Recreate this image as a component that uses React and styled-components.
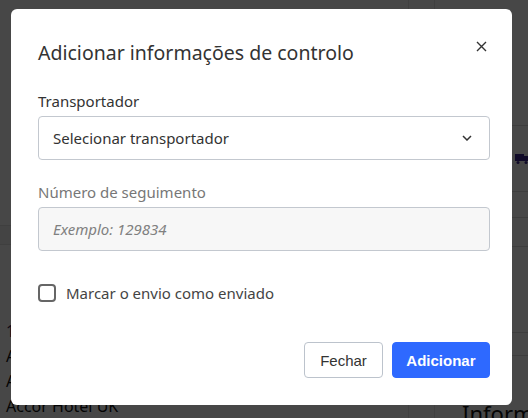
import React from "react";
import styled, { createGlobalStyle } from "styled-components";

const Global = createGlobalStyle`
  html, body { margin: 0; padding: 0; }
  body {
    width: 528px; height: 418px; overflow: hidden;
    font-family: "Noto Sans", "Liberation Sans", sans-serif;
    background: #fff;
  }
`;

const Page = styled.div`
  display: flex;
  width: 528px;
  height: 418px;
  background: #fff;
  overflow: hidden;
`;

const MainCol = styled.div`
  width: 408px;
  flex-shrink: 0;
  display: flex;
  flex-direction: column;
  border-right: 1px solid #e4e4e4;
`;

const TopArea = styled.div`
  height: 225px;
`;

const Band = styled.div`
  height: 18px;
  background: #f2f2f2;
  border-top: 1px solid #e0e0e0;
  border-bottom: 1px solid #e0e0e0;
`;

const Rows = styled.div`
  display: flex;
  flex-direction: column;
  padding: 77px 0 0 6px;
  gap: 6px;
`;

const BgText = styled.div`
  font-size: 16px;
  line-height: 19px;
  color: ${p => p.$c || "#111"};
`;

const Gutter = styled.div`
  width: 25px;
  flex-shrink: 0;
  border-right: 1px solid #e4e4e4;
`;

const Side = styled.div`
  flex: 1;
  min-width: 0;
  overflow: hidden;
  display: flex;
  flex-direction: column;
`;

const SideRow = styled.div`
  height: ${p => p.$h}px;
  flex-shrink: 0;
  border-bottom: 1px solid #dcdcdc;
  display: flex;
  align-items: center;
  justify-content: flex-end;
`;

const SideTitle = styled.div`
  margin-top: auto;
  padding-left: 27px;
  font-size: 22px;
  line-height: 16px;
  height: 13px;
  color: #111;
  white-space: nowrap;
  overflow: hidden;
`;

const Overlay = styled.div`
  position: fixed;
  inset: 0;
  background: rgba(0, 0, 0, 0.72);
`;

const Modal = styled.div`
  position: fixed;
  top: 9px;
  left: 11px;
  width: 501px;
  height: 396px;
  box-sizing: border-box;
  background: #fff;
  border-radius: 6px;
  padding: 31px 22px 27px 27px;
  display: flex;
  flex-direction: column;
`;

const Header = styled.div`
  display: flex;
  justify-content: space-between;
  align-items: flex-start;
  margin-bottom: 25px;
`;

const Title = styled.h2`
  margin: 0;
  font-size: 19.5px;
  line-height: 26px;
  font-weight: 400;
  color: #333;
`;

const Close = styled.button`
  border: 0;
  background: none;
  padding: 0;
  margin: 0 3px 0 0;
  width: 12px;
  height: 12px;
  display: flex;
  align-items: center;
  justify-content: center;
  color: #333;
`;

const Field = styled.div`
  display: flex;
  flex-direction: column;
  gap: 5px;
  margin-bottom: 22px;
`;

const Label = styled.label`
  font-size: 15px;
  line-height: 20px;
  color: ${p => (p.$muted ? "#777" : "#333")};
`;

const Box = styled.div`
  height: 44px;
  box-sizing: border-box;
  border: 1px solid #c3c8cf;
  border-radius: 4px;
  background: ${p => (p.$disabled ? "#f7f7f7" : "#fff")};
  display: flex;
  align-items: center;
  justify-content: space-between;
  padding: 0 17px 0 14px;
  font-size: 15px;
  color: ${p => (p.$disabled ? "#808080" : "#333")};
  font-style: ${p => (p.$disabled ? "italic" : "normal")};
`;

const CheckRow = styled.div`
  display: flex;
  align-items: center;
  gap: 10px;
  margin-top: 10px;
  font-size: 15px;
  color: #444;
`;

const CheckBox = styled.span`
  width: 18px;
  height: 18px;
  box-sizing: border-box;
  border: 2px solid #666;
  border-radius: 4px;
  background: #fff;
`;

const Footer = styled.div`
  margin-top: auto;
  display: flex;
  justify-content: flex-end;
  gap: 9px;
`;

const Button = styled.button`
  height: 36px;
  box-sizing: border-box;
  border-radius: 4px;
  font-family: "Liberation Sans", Arial, sans-serif;
  font-size: 15px;
  padding: 0 ${p => (p.$primary ? 13.5 : 15)}px;
  border: 1px solid ${p => (p.$primary ? "#2e69ff" : "#bcc3cc")};
  background: ${p => (p.$primary ? "#2e69ff" : "#fff")};
  color: ${p => (p.$primary ? "#fff" : "#333")};
  font-weight: ${p => (p.$primary ? 700 : 400)};
`;

export default function App() {
  return (
    <>
      <Global />
      <Page>
        <MainCol>
          <TopArea />
          <Band />
          <Rows>
            <BgText $c="#3a1d4f">1</BgText>
            <BgText>A</BgText>
            <BgText>A</BgText>
            <BgText>Accor Hotel UK</BgText>
          </Rows>
        </MainCol>
        <Gutter />
        <Side>
          <SideRow $h={125} />
          <SideRow $h={65}>
            <svg width="14" height="10" viewBox="0 0 14 10" style={{ marginRight: -1 }}>
              <rect x="0" y="0" width="9" height="7" fill="#3b2790" />
              <rect x="9" y="2" width="5" height="5" fill="#3b2790" />
              <circle cx="3" cy="8.5" r="1.5" fill="#3b2790" />
              <circle cx="11" cy="8.5" r="1.5" fill="#3b2790" />
            </svg>
          </SideRow>
          <SideRow $h={25} />
          <SideRow $h={28} />
          <SideRow $h={85} />
          <SideRow $h={22} />
          <SideTitle>Informa</SideTitle>
        </Side>
      </Page>
      <Overlay />
      <Modal>
        <Header>
          <Title>Adicionar informações de controlo</Title>
          <Close aria-label="Fechar">
            <svg width="11" height="11" viewBox="0 0 11 11">
              <path d="M1 1L10 10M10 1L1 10" stroke="#333" strokeWidth="1.4" />
            </svg>
          </Close>
        </Header>
        <Field>
          <Label>Transportador</Label>
          <Box>
            <span>Selecionar transportador</span>
            <svg width="10" height="6" viewBox="0 0 10 6">
              <path d="M1 1l4 4 4-4" stroke="#333" strokeWidth="1.5" fill="none" />
            </svg>
          </Box>
        </Field>
        <Field>
          <Label $muted>Número de seguimento</Label>
          <Box $disabled>Exemplo: 129834</Box>
        </Field>
        <CheckRow>
          <CheckBox />
          <span>Marcar o envio como enviado</span>
        </CheckRow>
        <Footer>
          <Button>Fechar</Button>
          <Button $primary>Adicionar</Button>
        </Footer>
      </Modal>
    </>
  );
}
